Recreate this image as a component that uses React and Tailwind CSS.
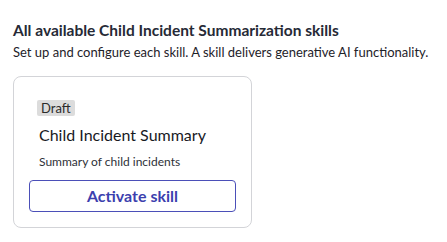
export default function App() {
  return (
    <div className="min-h-screen bg-white px-[13px] pt-[20px] text-[#1e2229]" style={{ fontFamily: "Lato, 'Noto Sans', sans-serif" }}>
      <h2 className="whitespace-nowrap text-[15.5px] font-bold leading-[20px] text-[#262a36]">All available Child Incident Summarization skills</h2>
      <p className="mt-[3px] whitespace-nowrap text-[13px] leading-[18px] text-[#1e2229]">Set up and configure each skill. A skill delivers generative AI functionality.</p>

      <div className="mt-[15px] flex w-[239px] flex-col rounded-[8px] border border-[#d3d4d8] px-[15px] pt-[23px] pb-[15px]">
        <div className="ml-[8px] self-start rounded-[2px] bg-[#dcdcdc] px-[4px] text-[13px] leading-[16px] text-[#2b2b2b]">Draft</div>
        <div className="ml-[10px] mt-[7px] text-[16px] leading-[24px] text-[#181a1f]">Child Incident Summary</div>
        <div className="ml-[10px] mt-[7px] text-[12px] leading-[16px] text-[#2e3138]">Summary of child incidents</div>
        <button className="mt-[10px] h-[32px] w-full rounded-[4px] border border-[#4b4fb8] text-[16px] font-bold text-[#3c3fae]">Activate skill</button>
      </div>
    </div>
  )
}
